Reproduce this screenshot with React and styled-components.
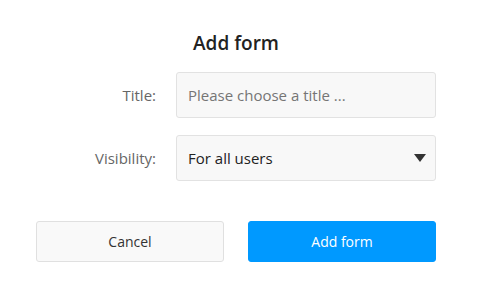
import styled, { createGlobalStyle } from 'styled-components'

const GlobalStyle = createGlobalStyle`
  html, body {
    margin: 0;
    padding: 0;
    background: #ffffff;
    font-family: "Open Sans", "Noto Sans", sans-serif;
  }
  * { box-sizing: border-box; }
`;

const Dialog = styled.div`
  width: 400px;
  margin-left: 36px;
  padding-top: 31px;
  display: flex;
  flex-direction: column;
`;

const Heading = styled.h2`
  margin: 0 0 16px;
  font-size: 19px;
  line-height: 25px;
  font-weight: 600;
  color: #222222;
  text-align: center;
`;

const Fields = styled.div`
  display: grid;
  grid-template-columns: 120px 260px;
  column-gap: 20px;
  row-gap: 17px;
  align-items: center;
`;

const Label = styled.label`
  font-size: 15px;
  color: #666666;
  text-align: right;
`;

const TextInput = styled.input`
  height: 46px;
  width: 100%;
  padding: 0 11px;
  border: 1px solid #e2e2e2;
  border-radius: 3px;
  background: #f8f8f8;
  font-family: inherit;
  font-size: 15px;
  color: #222222;
  outline: none;

  &::placeholder {
    color: #757575;
  }
`;

const SelectBox = styled.div`
  height: 46px;
  padding: 0 8px 0 11px;
  border: 1px solid #e2e2e2;
  border-radius: 3px;
  background: #f8f8f8;
  display: flex;
  align-items: center;
  justify-content: space-between;
  font-size: 15px;
  color: #222222;
`;

const Caret = styled.svg`
  width: 12px;
  height: 8px;
  margin-right: 1px;
`;

const Actions = styled.div`
  margin-top: 40px;
  display: grid;
  grid-template-columns: 1fr 1fr;
  column-gap: 24px;
`;

const Button = styled.button`
  height: 41px;
  border-radius: 3px;
  font-family: inherit;
  font-size: 14px;
  cursor: pointer;
  border: 1px solid ${props => props.primary ? '#0099ff' : '#e0e0e0'};
  background: ${props => props.primary ? '#0099ff' : '#f9f9f9'};
  color: ${props => props.primary ? '#ffffff' : '#333333'};
`;

export default function App() {
  return (
    <>
      <GlobalStyle />
      <Dialog>
        <Heading>Add form</Heading>
        <Fields>
          <Label>Title:</Label>
          <TextInput placeholder="Please choose a title ..." />
          <Label>Visibility:</Label>
          <SelectBox>
            <span>For all users</span>
            <Caret viewBox="0 0 12 8">
              <path d="M0 0 H12 L6 8 Z" fill="#333333" />
            </Caret>
          </SelectBox>
        </Fields>
        <Actions>
          <Button>Cancel</Button>
          <Button primary>Add form</Button>
        </Actions>
      </Dialog>
    </>
  )
}
